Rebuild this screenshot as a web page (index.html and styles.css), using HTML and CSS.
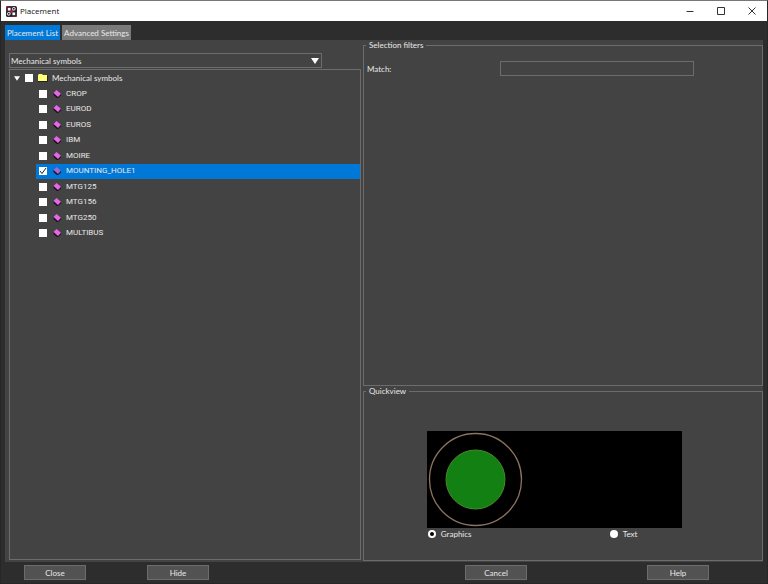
FILE: index.html
```html
<!DOCTYPE html>
<html lang="en">
<head>
	<meta charset="UTF-8" />
	<title>Placement</title>
	<link rel="stylesheet" href="styles.css">
</head>
<body>
	<!--title bar-->
	<header class="titlebar">
		<svg class="logo" viewBox="0 0 12 12">
			<rect width="12" height="12" rx="2" fill="#20242e" />
			<path d="M0 6V2Q0 0 2 0H7M12 6v4q0 2-2 2H5" fill="none" stroke="#c8203c" />
			<path d="M2 10L10 2" stroke="#c8203c" stroke-width="2" />
			<rect x="2" y="2" width="3" height="3" fill="#fff" />
			<rect x="7" y="7" width="3" height="3" fill="#fff" />
			<circle cx="8.5" cy="3" r="1.5" fill="#20242e" stroke="#fff" />
			<circle cx="3" cy="8.5" r="1.5" fill="#20242e" stroke="#fff" />
		</svg>
		<h1>Placement</h1>
		<button type="button" class="win" aria-label="Minimize"><svg viewBox="0 0 8 8"><path d="M0.5 4.5h7" /></svg></button>
		<button type="button" class="win" aria-label="Maximize"><svg viewBox="0 0 8 8"><path d="M0.5 0.5h7v7h-7z" /></svg></button>
		<button type="button" class="win" aria-label="Close window"><svg viewBox="0 0 8 8"><path d="M0.5 0.5l7 7M7.5 0.5l-7 7" /></svg></button>
	</header>

	<nav class="tabs">
		<button type="button" class="tab active">Placement List</button>
		<button type="button" class="tab">Advanced Settings</button>
	</nav>

	<main class="panel">
		<!--symbol list-->
		<section class="list">
			<div class="combo">
				<select aria-label="Symbol type">
					<option>Mechanical symbols</option>
				</select>
				<svg class="arrow" viewBox="0 0 8 6"><path d="M0 0h8L4 6z" /></svg>
			</div>
			<div class="tree">
				<div class="root">
					<svg class="arrow" viewBox="0 0 8 6"><path d="M0 0h8L4 6z" /></svg>
					<input type="checkbox" id="all">
					<svg class="folder" viewBox="0 0 10 8"><path d="M0 1l1-1h3l1 1h4v6H0z" fill="#ffff78" /><path d="M0 7.5h9.5V1.5" fill="none" stroke="#222" /></svg>
					<label for="all">Mechanical symbols</label>
				</div>
				<ul id="symbols"></ul>
			</div>
		</section>

		<section class="side">
			<fieldset class="filters">
				<legend>Selection filters</legend>
				<div class="match">
					<label for="match">Match:</label>
					<input type="text" id="match">
				</div>
			</fieldset>
			<fieldset class="quickview">
				<legend>Quickview</legend>
				<div class="preview">
					<svg class="drawing" viewBox="0 0 97 97">
						<circle cx="48.5" cy="48.5" r="46" fill="none" stroke="#8c7260" stroke-width="1.3" />
						<circle cx="48.5" cy="48.5" r="29.5" fill="#128012" stroke="#4b8a28" />
					</svg>
				</div>
				<div class="modes">
					<label><input type="radio" name="view" checked>Graphics</label>
					<label><input type="radio" name="view">Text</label>
				</div>
			</fieldset>
		</section>
	</main>

	<!--buttons-->
	<footer class="actions">
		<div class="group left">
			<button type="button">Close</button>
			<button type="button">Hide</button>
		</div>
		<div class="group right">
			<button type="button">Cancel</button>
			<button type="button">Help</button>
		</div>
	</footer>

	<script src="script.js"></script>
</body>
</html>
```
FILE: styles.css
```css
* {
	box-sizing: border-box;
}
body {
	margin: 0;
	min-height: 100vh;
	display: flex;
	flex-direction: column;
	background: #2d2d2d;
	border: 1px solid #262626;
	border-top-color: #777;
	color: #e8e8e8;
	font-family: Lato, "Open Sans", sans-serif;
	font-size: 8px;
	line-height: 12px;
}
button, input, select {
	margin: 0;
	padding: 0;
	font: inherit;
	color: inherit;
}
svg {
	display: block;
	flex: none;
}

/* title bar */
.titlebar {
	display: flex;
	align-items: center;
	height: 20px;
	padding-left: 5px;
	background: #fff;
	color: #111;
}
.titlebar h1 {
	flex: 1;
	margin: 0 0 0 3px;
	font-family: "Open Sans", sans-serif;
	font-size: 8px;
	font-weight: normal;
}
.logo {
	width: 11px;
	height: 11px;
}
.win {
	display: flex;
	align-items: center;
	justify-content: center;
	width: 31px;
	height: 20px;
	border: 0;
	background: none;
}
.win svg {
	width: 8px;
	height: 8px;
	fill: none;
	stroke: #333;
}

.tabs {
	display: flex;
	gap: 2px;
	padding: 4px 4px 0;
}
.tab {
	height: 15px;
	padding: 0 2px;
	border: 0;
	background: #7a7a7a;
}
.tab.active {
	background: #0078d7;
}

.panel {
	flex: 1;
	display: grid;
	grid-template-columns: 352fr 400fr;
	gap: 2px;
	margin: 0 4px;
	padding: 0 0 1px 4px;
	background: #434343;
}

/* symbol list */
.list {
	display: flex;
	flex-direction: column;
	padding: 13px 0 1px;
}
.combo {
	position: relative;
	width: 89%;
	margin-bottom: 1px;
}
.combo select {
	display: block;
	width: 100%;
	height: 15px;
	padding: 0 1px;
	appearance: none;
	background: none;
	border: 1px solid #6c6c6c;
	border-radius: 0;
}
.arrow {
	width: 8px;
	height: 6px;
	fill: #fff;
}
.combo .arrow {
	position: absolute;
	right: 3px;
	top: 5px;
	pointer-events: none;
}
.tree {
	flex: 1;
	border: 1px solid #6c6c6c;
}
.root {
	display: flex;
	align-items: center;
	height: 16px;
	padding-left: 4px;
}
.root .arrow {
	width: 6px;
	height: 5px;
	margin-right: 5px;
}
input[type=checkbox] {
	appearance: none;
	flex: none;
	width: 8px;
	height: 8px;
	background: #fff;
}
input[type=checkbox]:checked {
	background: #fff url("data:image/svg+xml,%3Csvg xmlns='http://www.w3.org/2000/svg' viewBox='0 0 8 8'%3E%3Cpath d='M1 4l2 2.5L7 1' fill='none' stroke='%23222'/%3E%3C/svg%3E");
}
.folder {
	width: 10px;
	height: 8px;
	margin: 0 4px 0 5px;
}
/* ten equal rows */
.tree ul {
	display: grid;
	grid-auto-rows: 1fr;
	height: 155px;
	margin: 0;
	padding: 0 0 0 26px;
	list-style: none;
	font-family: Roboto, sans-serif;
}
.tree li {
	display: flex;
	align-items: center;
	padding-left: 3px;
}
.tree li.selected {
	background: #0078d7;
}
.chip {
	width: 8px;
	height: 8px;
	margin: 0 5px 0 6px;
}
.chip .face {
	fill: #e864e8;
}
.selected .chip .face {
	fill: #a068d8;
}

/* right side */
.side {
	display: flex;
	flex-direction: column;
	padding-top: 1px;
}
fieldset {
	min-width: 0;
	margin: 0;
	padding: 0 3px;
	border: 1px solid #6c6c6c;
}
legend {
	margin-left: -1px;
	padding: 0 3px;
	line-height: 8px;
}
.filters {
	flex: 1;
}
.match {
	display: grid;
	grid-template-columns: 133fr 193fr 65fr;
	align-items: center;
	padding-top: 12px;
}
.match input {
	width: 100%;
	height: 15px;
	padding: 0 2px;
	background: none;
	border: 1px solid #6c6c6c;
}
.quickview {
	height: 174px;
	margin-top: 1px;
}
.preview, .modes {
	width: 65%;
	margin: 0 auto 0 calc(15% + 1px);
}
.preview {
	height: 97px;
	margin-top: 36px;
	background: #000;
}
.drawing {
	width: 97px;
	height: 97px;
}
.modes {
	display: grid;
	grid-template-columns: 182fr 73fr;
}
.modes label {
	display: flex;
	align-items: center;
	gap: 5px;
}
input[type=radio] {
	appearance: none;
	width: 8px;
	height: 8px;
	margin-left: 1px;
	border-radius: 50%;
	background: #fff;
}
input[type=radio]:checked {
	background: #000;
	border: 2px solid #fff;
}

.actions {
	display: grid;
	grid-template-columns: 1fr 1fr;
	padding: 3px 0;
}
.group {
	display: flex;
}
.group.left {
	gap: 61px;
	padding-left: 23px;
}
.group.right {
	justify-content: flex-end;
	gap: 120px;
	padding-right: 58px;
}
.group button {
	width: 62px;
	height: 15px;
	background: #525252;
	border: 1px solid #6c6c6c;
}
```
FILE: script.js
```js
//symbols in the library
var names = ['CROP', 'EUROD', 'EUROS', 'IBM', 'MOIRE', 'MOUNTING_HOLE1', 'MTG125', 'MTG156', 'MTG250', 'MULTIBUS'];
var picked = 'MOUNTING_HOLE1';

var chip = '<svg class="chip" viewBox="0 0 8 8">' +
	'<path d="M0.5 3v2L4.5 8.5 8 5.5V3.5z" fill="#1c101c"/>' +
	'<path class="face" d="M3.5 0L8 3.8 5 7 0.5 3z"/></svg>';

var html = '';
for(var i = 0; i < names.length; i++){
	var on = names[i] == picked;
	html += '<li' + (on ? ' class="selected"' : '') + '>' +
		'<input type="checkbox" id="s' + i + '"' + (on ? ' checked' : '') + '>' + chip +
		'<label for="s' + i + '">' + names[i] + '</label></li>';
}
document.getElementById('symbols').innerHTML = html;
```
